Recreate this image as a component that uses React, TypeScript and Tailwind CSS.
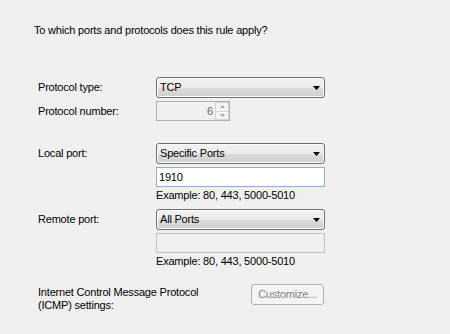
const font = { fontFamily: '"Liberation Sans", Arial, sans-serif' };

function Combo({ value }: { value: string }) {
  return (
    <div className="relative flex h-[21px] w-[169px] items-center rounded-[3px] border border-[#707070] bg-[linear-gradient(#f2f2f2_0%,#ebebeb_50%,#dddddd_51%,#cfcfcf_100%)] pl-[3px] text-black shadow-[inset_0_0_0_1px_#fcfcfc]">
      <span>{value}</span>
      <svg className="absolute right-[4px] top-[8px]" width="7" height="4" viewBox="0 0 7 4">
        <path d="M0 0H7L3.5 4Z" fill="#000" />
      </svg>
    </div>
  );
}

function Example() {
  return <div className="mt-[2px] pl-[118px] leading-[13px] text-black">Example: 80, 443, 5000-5010</div>;
}

function Label({ children }: { children: React.ReactNode }) {
  return <div className="w-[118px] shrink-0 text-black">{children}</div>;
}

export default function App() {
  return (
    <div className="h-[334px] w-[450px] overflow-hidden bg-[#f0f0f0] text-[11px] leading-[13px] tracking-[-0.2px]" style={font}>
      <div className="pl-[34px] pt-[24px] text-black">To which ports and protocols does this rule apply?</div>

      <div className="ml-[38px] w-[287px]">
        <div className="mt-[40px] flex items-center">
          <Label>Protocol type:</Label>
          <Combo value="TCP" />
        </div>

        <div className="mt-[3px] flex items-center">
          <Label>Protocol number:</Label>
          <div className="flex h-[20px] w-[74px] items-stretch border border-[#adb2b5] bg-[#f0f0f0]">
            <div className="flex flex-1 items-center justify-end pr-[2px] text-[#6d6d6d]">6</div>
            <div className="flex w-[14px] flex-col">
              <div className="flex flex-1 items-center justify-center border border-[#d5d5d5] bg-[#f4f4f4]">
                <svg width="5" height="3" viewBox="0 0 5 3">
                  <path d="M0 3H5L2.5 0Z" fill="#a3a3a3" />
                </svg>
              </div>
              <div className="flex flex-1 items-center justify-center border border-t-0 border-[#d5d5d5] bg-[#f4f4f4]">
                <svg width="5" height="3" viewBox="0 0 5 3">
                  <path d="M0 0H5L2.5 3Z" fill="#a3a3a3" />
                </svg>
              </div>
            </div>
          </div>
        </div>

        <div className="mt-[22px] flex items-center">
          <Label>Local port:</Label>
          <Combo value="Specific Ports" />
        </div>
        <div className="mt-[3px] pl-[118px]">
          <div className="flex h-[20px] w-[169px] items-center border border-[#8fb1d8] bg-white pl-[2px] text-black">1910</div>
        </div>
        <Example />

        <div className="mt-[7px] flex items-center">
          <Label>Remote port:</Label>
          <Combo value="All Ports" />
        </div>
        <div className="mt-[3px] pl-[118px]">
          <div className="h-[20px] w-[169px] border border-[#c2c2c2] bg-[#f0f0f0]" />
        </div>
        <Example />

        <div className="mt-[16px] flex items-start justify-between">
          <div className="pt-[2px] text-black">
            Internet Control Message Protocol
            <br />
            (ICMP) settings:
          </div>
          <div className="mr-[1px] flex h-[21px] w-[73px] items-center justify-center rounded-[3px] border border-[#adb2b5] bg-[#f4f4f4] text-[#838383]">
            Customize...
          </div>
        </div>
      </div>
    </div>
  );
}
